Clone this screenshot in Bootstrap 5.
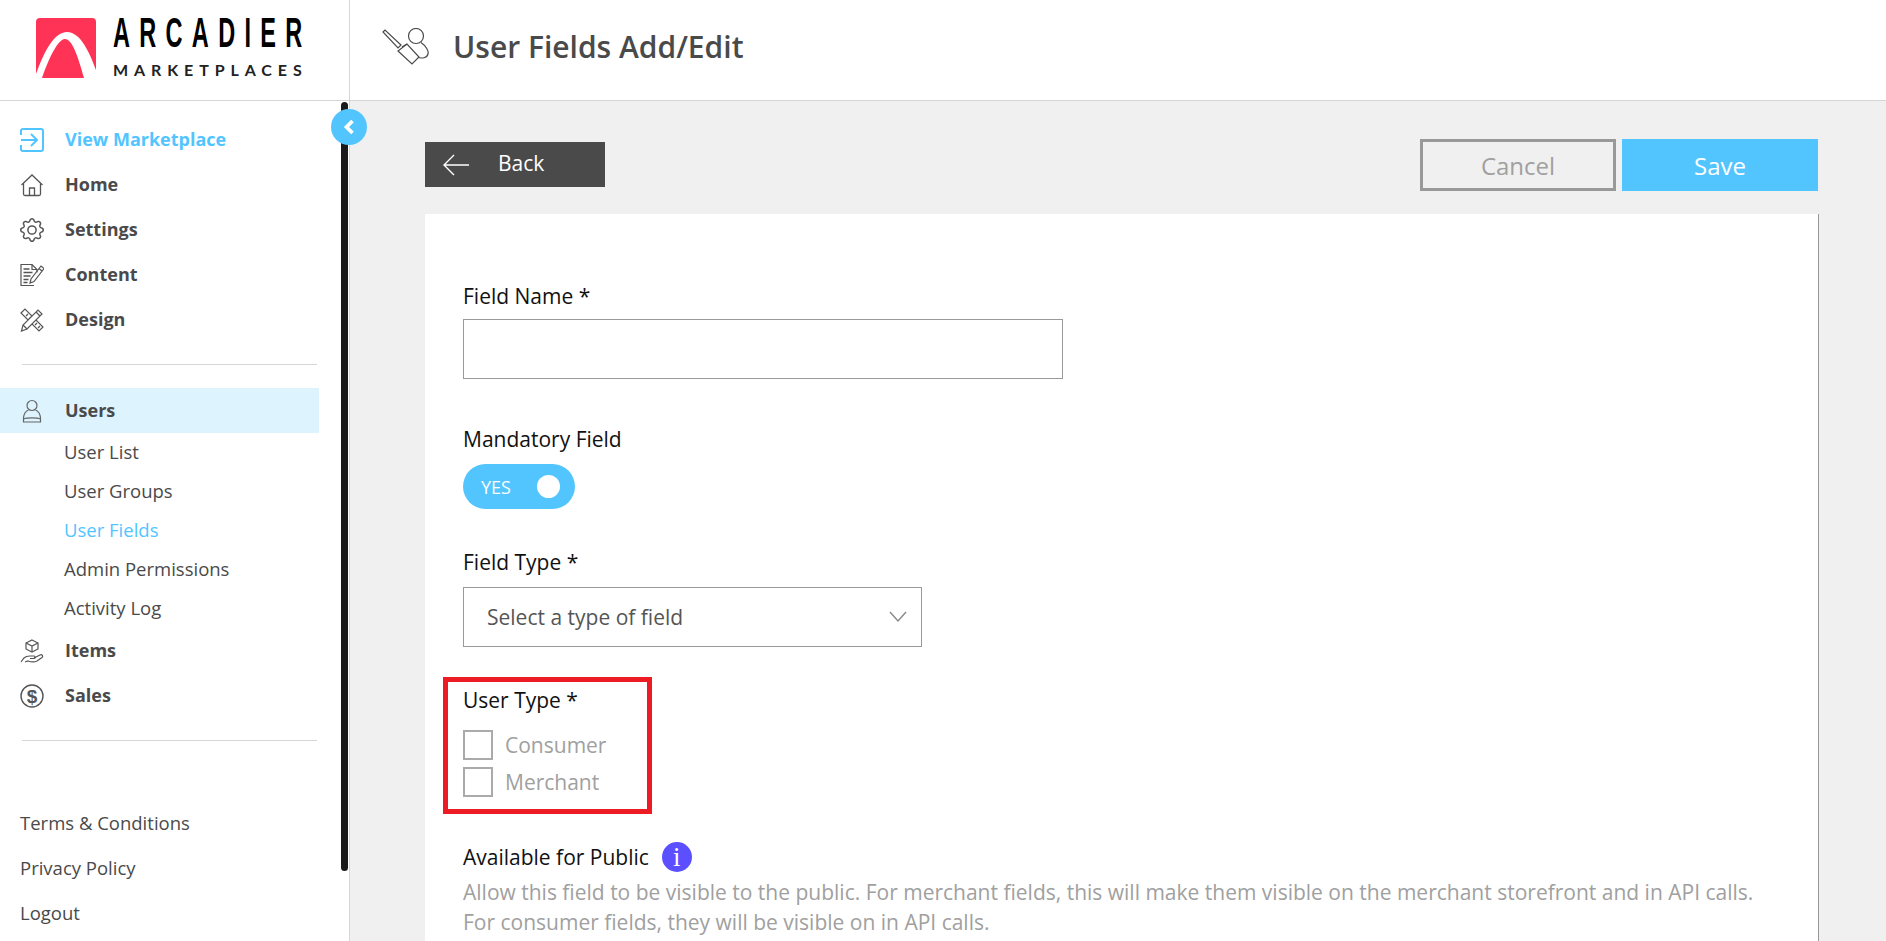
<!DOCTYPE html>
<html lang="en">
<head>
<meta charset="utf-8">
<title>User Fields Add/Edit</title>
<link href="https://cdn.jsdelivr.net/npm/bootstrap@5.3.0/dist/css/bootstrap.min.css" rel="stylesheet">
<style>
html,body{height:100%;overflow:hidden}
body{font-family:"Open Sans","Liberation Sans",sans-serif;background:#fff;color:#000}
.top-bar{height:101px;border-bottom:1px solid #d6d6d6;flex:none}
.logo-cell{width:350px;border-right:1px solid #d6d6d6;padding:18px 0 0 36px;flex:none}
.logo-mark{flex:none}
.logo-words{margin-left:17px;width:195px;flex:none}
.logo-big{font-family:"Liberation Sans Narrow","Liberation Sans",sans-serif;font-size:42px;font-weight:700;line-height:30px;height:32px;letter-spacing:16.6px;color:#000;transform:scaleX(.56);transform-origin:0 0;white-space:nowrap}
.logo-small{font-family:Lato,"Liberation Sans",sans-serif;font-size:16px;font-weight:700;line-height:16px;letter-spacing:5.9px;color:#222;margin-top:12px;white-space:nowrap}
.page-title{font-size:30px;font-weight:600;color:#4a4a4a;margin:0 0 6px 23px;line-height:1}
.title-icon{margin:0 0 6px 32px}
.body-row{flex:1;min-height:0}
.side-pane{width:350px;border-right:1px solid #d6d6d6;flex:none;padding-top:16px;position:relative;background:#fff}
.side-row{width:319px;height:45px;padding-left:20px;color:#4a4a4a;font-size:18px;font-weight:700;text-decoration:none}
.side-row svg{width:24px;height:24px;margin-right:21px;flex:none}
.side-row.is-blue{color:#52c5ff}
.side-row.is-open{background:#ddf3fe}
.side-sub{width:319px;height:39px;padding:0 0 2px 64px;color:#4a4a4a;font-size:18.5px;text-decoration:none}
.side-sub.is-blue{color:#52c5ff}
.side-rule{width:295px;height:1px;background:#d6d6d6;margin:22px 0 23px 22px}
.side-rule-last{margin:22px 0 59px 22px}
.foot-link{height:45px;padding-left:20px;color:#4a4a4a;font-size:18.5px;font-weight:500;text-decoration:none}
.scroll-thumb{position:absolute;left:341px;top:1px;width:7px;height:769px;background:#1a1a1a;border-radius:4px}
.collapse-dot{position:absolute;left:331px;top:8px;width:36px;height:36px;border-radius:50%;background:#52c5ff;z-index:3}
.work-pane{flex:1;min-width:0;background:#f0f0f0;padding:38px 67px 0 75px;overflow:hidden}
.back-btn{width:180px;height:45px;margin-top:3px;background:#4a4a4a;color:#fff;font-size:21px;border:0;border-radius:0;padding:0 0 2px 17px;justify-content:flex-start}
.back-btn:hover{background:#4a4a4a;color:#fff}
.back-btn svg{margin:2px 28px 0 0}
.tool-right{gap:6px;margin-right:1px}
.act-btn{width:196px;height:52px;border-radius:0;font-size:24px;padding:2px 0 0;line-height:1}
.act-cancel{background:transparent;border:3px solid #999;color:#a0a0a0}
.act-save{background:#52c5ff;border:3px solid #52c5ff;color:#fff}
.act-save:hover{background:#52c5ff;color:#fff;border-color:#52c5ff}
.form-sheet{background:#fff;border-right:1px solid #999;margin-top:23px;padding:67px 38px 100px}
.fld-label{font-size:21px;line-height:30px;color:#111;margin:0}
.fld-input{width:600px;height:60px;border:1px solid #999;border-radius:0;margin-top:8px}
.fld-select{width:459px;height:60px;border:1px solid #999;border-radius:0;margin-top:10px;padding:2px 23px 0;font-size:21px;color:#555;background-size:24px 14px;background-position:right 11px center;background-image:url("data:image/svg+xml,%3csvg xmlns='http://www.w3.org/2000/svg' viewBox='0 0 24 14'%3e%3cpath fill='none' stroke='%23888' stroke-width='1.4' d='M4 2l8 9 8-9'/%3e%3c/svg%3e")}
.gap-mandatory{margin-top:45px}
.yes-toggle{width:112px;height:45px;background:#52c5ff;border-radius:23px;margin-top:10px;padding:0 15px 0 18px;color:#fff;font-size:18px}
.yes-word{padding-top:2px}
.yes-knob{width:23px;height:23px;border-radius:50%;background:#fff}
.gap-type{margin-top:38px}
.user-box{width:209px;height:137px;border:5px solid #ed1c24;margin:30px 0 0 -20px;padding:3px 0 0 15px}
.chk-list{margin-top:15px;gap:7px}
.chk-box[type=checkbox]{width:30px;height:30px;margin:0;border:2px solid #aaa;border-radius:0;flex:none}
.chk-label{font-size:21px;color:#a0a0a0;margin-left:12px;line-height:30px}
.gap-public{margin-top:28px}
.info-dot{width:30px;height:30px;border-radius:50%;background:#5b4fff;color:#fff;font-family:"Liberation Serif",serif;font-size:27px;font-weight:400;line-height:1;margin-left:13px}
.help-text{font-size:21px;line-height:30px;color:#a0a0a0;margin:5px 0 0;white-space:nowrap}
</style>
</head>
<body class="d-flex flex-column">
<header class="top-bar d-flex align-items-stretch">
  <div class="logo-cell d-flex align-items-start">
    <svg class="logo-mark" width="60" height="60" viewBox="0 0 60 60" aria-hidden="true"><rect width="60" height="60" rx="4" fill="#ff3355"/><path fill="#fff" d="M0 56C8 34 18 14 31 14C45 14 54 36 60 52V60H48C42 38 36 21 29 21C22 21 13 40 6 60H0Z"/></svg>
    <div class="logo-words">
      <div class="logo-big">ARCADIER</div>
      <div class="logo-small">MARKETPLACES</div>
    </div>
  </div>
  <div class="d-flex align-items-center">
    <svg class="title-icon" width="48" height="38" viewBox="0 0 48 38" fill="none" stroke="#4a4a4a" stroke-width="1.2" aria-hidden="true"><circle cx="34" cy="8" r="7.500"/><path d="M39 14.500C44 18 47 23 46 26C45 30 40 31 35 29"/><path d="M1 4l2-2 16 15-3 3z" fill="#fff"/><path d="M16 23L30 36L37 29L25 16Z" fill="#fff"/><path d="M20 19l5-3"/></svg>
    <h1 class="page-title">User Fields Add/Edit</h1>
  </div>
</header>
<div class="body-row d-flex">
  <aside class="side-pane">
    <div class="scroll-thumb"></div>
    <div class="collapse-dot d-flex align-items-center justify-content-center">
      <svg width="12" height="16" viewBox="0 0 12 16" aria-hidden="true"><path d="M9.500 2L3.500 8l6 6" fill="none" stroke="#fff" stroke-width="3.800"/></svg>
    </div>
    <a href="#" class="side-row is-blue d-flex align-items-center">
      <svg viewBox="0 0 24 24" fill="none" stroke="#52c5ff" stroke-width="2" aria-hidden="true"><path d="M1 7V3a2 2 0 0 1 2-2h18a2 2 0 0 1 2 2v18a2 2 0 0 1-2 2H3a2 2 0 0 1-2-2v-4"/><path d="M1 12h16"/><path d="M11 6l6 6-6 6"/></svg>View Marketplace</a>
    <a href="#" class="side-row d-flex align-items-center">
      <svg viewBox="0 0 24 24" fill="none" stroke="#555" stroke-width="1.3" aria-hidden="true"><path d="M1.500 12L12 2l10.500 10"/><path d="M3.500 10.500V21a1.500 1.500 0 0 0 1.500 1.500h14a1.500 1.500 0 0 0 1.500-1.500V10.500"/><path d="M9.500 22.500V15h5v7.500"/></svg>Home</a>
    <a href="#" class="side-row d-flex align-items-center">
      <svg viewBox="0 0 16 16" fill="#555" aria-hidden="true"><path d="M8 4.754a3.246 3.246 0 1 0 0 6.492 3.246 3.246 0 0 0 0-6.492zM5.754 8a2.246 2.246 0 1 1 4.492 0 2.246 2.246 0 0 1-4.492 0z"/><path d="M9.796 1.343c-.527-1.79-3.065-1.79-3.592 0l-.094.319a.873.873 0 0 1-1.255.52l-.292-.16c-1.64-.892-3.433.902-2.54 2.541l.159.292a.873.873 0 0 1-.52 1.255l-.319.094c-1.79.527-1.79 3.065 0 3.592l.319.094a.873.873 0 0 1 .52 1.255l-.16.292c-.892 1.64.901 3.434 2.541 2.54l.292-.159a.873.873 0 0 1 1.255.52l.094.319c.527 1.79 3.065 1.79 3.592 0l.094-.319a.873.873 0 0 1 1.255-.52l.292.16c1.64.893 3.434-.902 2.54-2.541l-.159-.292a.873.873 0 0 1 .52-1.255l.319-.094c1.79-.527 1.79-3.065 0-3.592l-.319-.094a.873.873 0 0 1-.52-1.255l.16-.292c.893-1.64-.902-3.433-2.541-2.54l-.292.159a.873.873 0 0 1-1.255-.52l-.094-.319zm-2.633.283c.246-.835 1.428-.835 1.674 0l.094.319a1.873 1.873 0 0 0 2.693 1.115l.291-.16c.764-.415 1.6.42 1.184 1.185l-.159.292a1.873 1.873 0 0 0 1.116 2.692l.318.094c.835.246.835 1.428 0 1.674l-.319.094a1.873 1.873 0 0 0-1.115 2.693l.16.291c.415.764-.42 1.6-1.185 1.184l-.291-.159a1.873 1.873 0 0 0-2.693 1.116l-.094.318c-.246.835-1.428.835-1.674 0l-.094-.319a1.873 1.873 0 0 0-2.692-1.115l-.292.16c-.764.415-1.6-.42-1.184-1.185l.159-.291A1.873 1.873 0 0 0 1.945 8.93l-.319-.094c-.835-.246-.835-1.428 0-1.674l.319-.094A1.873 1.873 0 0 0 3.06 4.377l-.16-.292c-.415-.764.42-1.6 1.185-1.184l.292.159a1.873 1.873 0 0 0 2.692-1.115l.094-.319z"/></svg>Settings</a>
    <a href="#" class="side-row d-flex align-items-center">
      <svg viewBox="0 0 24 24" fill="none" stroke="#555" stroke-width="1.2" aria-hidden="true"><path d="M14 22.500H1V1.500h11l5 5v3"/><path d="M12 1.500v5h5"/><path d="M3.500 6h6M3.500 9.500h9M3.500 13h7M3.500 16.500h5M3.500 19.500h4" stroke-width="1.6"/><path d="M10 20l1-4L21 3l3 2.500-10 13z"/><path d="M19 5.500l3 2.500"/></svg>Content</a>
    <a href="#" class="side-row d-flex align-items-center">
      <svg viewBox="0 0 24 24" fill="none" stroke="#555" stroke-width="1.2" aria-hidden="true"><path d="M1 5l4-4 18 18-4 4z"/><path d="M6 8l2-2M9 11l2-2M12 14l2-2M15 17l2-2M18 20l2-2"/><path d="M1.500 23l1.500-6L18 2l4 4L7 21z" fill="#fff"/><path d="M3 17l4 4M16 4l4 4"/></svg>Design</a>
    <div class="side-rule"></div>
    <a href="#" class="side-row is-open d-flex align-items-center">
      <svg viewBox="0 0 24 24" fill="none" stroke="#666" stroke-width="1.2" aria-hidden="true"><circle cx="12" cy="6.500" r="5"/><path d="M8.500 11C5 12.500 3.500 15 3.500 20V23H20.500V20C20.500 15 19 12.500 15.500 11"/><path d="M3.500 20C7 18.500 17 18.500 20.500 20"/></svg>Users</a>
    <a href="#" class="side-sub d-flex align-items-center">User List</a>
    <a href="#" class="side-sub d-flex align-items-center">User Groups</a>
    <a href="#" class="side-sub is-blue d-flex align-items-center">User Fields</a>
    <a href="#" class="side-sub d-flex align-items-center">Admin Permissions</a>
    <a href="#" class="side-sub d-flex align-items-center">Activity Log</a>
    <a href="#" class="side-row d-flex align-items-center">
      <svg viewBox="0 0 24 24" fill="none" stroke="#555" stroke-width="1.2" aria-hidden="true"><path d="M12 1l6 3v6l-6 3-6-3V4z"/><path d="M6 4l6 3 6-3M12 7v6"/><path d="M1 23l3-4c2-2 4-2 6-2h4c1.500 0 1.500 2.500 0 2.500h-4"/><path d="M14 19l6-3c2-1 3.500 1 2 2.500L17 22c-2 1-6 1-9 0l-3 1"/></svg>Items</a>
    <a href="#" class="side-row d-flex align-items-center">
      <svg viewBox="0 0 24 24" fill="none" stroke="#555" stroke-width="1.4" aria-hidden="true"><circle cx="12" cy="12" r="11"/><text x="12" y="18.500" text-anchor="middle" font-family="Liberation Sans, sans-serif" font-size="19" fill="#555" stroke="none">$</text></svg>Sales</a>
    <div class="side-rule-last side-rule"></div>
    <a href="#" class="foot-link d-flex align-items-center">Terms &amp; Conditions</a>
    <a href="#" class="foot-link d-flex align-items-center">Privacy Policy</a>
    <a href="#" class="foot-link d-flex align-items-center">Logout</a>
  </aside>
  <main class="work-pane">
    <div class="d-flex justify-content-between align-items-start">
      <button type="button" class="btn back-btn d-flex align-items-center">
        <svg width="28" height="24" viewBox="0 0 28 24" fill="none" stroke="#fff" stroke-width="1.4" aria-hidden="true"><path d="M27 12H2M12 2L2 12l10 10"/></svg>Back</button>
      <div class="d-flex tool-right">
        <button type="button" class="btn act-btn act-cancel">Cancel</button>
        <button type="button" class="btn act-btn act-save">Save</button>
      </div>
    </div>
    <form class="form-sheet">
      <label class="fld-label d-block">Field Name *</label>
      <input type="text" class="form-control fld-input" aria-label="Field Name">
      <label class="fld-label d-block gap-mandatory">Mandatory Field</label>
      <div class="yes-toggle d-flex align-items-center justify-content-between"><span class="yes-word">YES</span><span class="yes-knob"></span></div>
      <label class="fld-label d-block gap-type">Field Type *</label>
      <select class="form-select fld-select" aria-label="Field Type"><option>Select a type of field</option></select>
      <div class="user-box">
        <label class="fld-label d-block">User Type *</label>
        <div class="chk-list d-flex flex-column">
          <div class="d-flex align-items-center"><input class="form-check-input chk-box" type="checkbox" id="ck1"><label class="chk-label" for="ck1">Consumer</label></div>
          <div class="d-flex align-items-center"><input class="form-check-input chk-box" type="checkbox" id="ck2"><label class="chk-label" for="ck2">Merchant</label></div>
        </div>
      </div>
      <div class="d-flex align-items-center gap-public"><label class="fld-label">Available for Public</label><span class="info-dot d-flex align-items-center justify-content-center">i</span></div>
      <p class="help-text">Allow this field to be visible to the public. For merchant fields, this will make them visible on the merchant storefront and in API calls.<br>For consumer fields, they will be visible on in API calls.</p>
    </form>
  </main>
</div>
</body>
</html>
